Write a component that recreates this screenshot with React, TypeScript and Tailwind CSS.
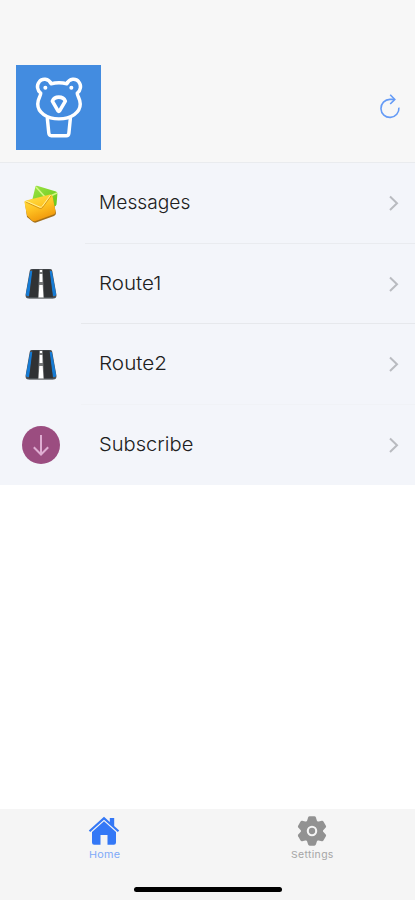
import type { ReactNode } from "react";

function BearLogo() {
  return (
    <svg width="85" height="85" viewBox="0 0 86 86" fill="none" stroke="#fff" strokeWidth="3.5" strokeLinejoin="round" strokeLinecap="round">
      <path d="M35.500 19 C33 13.500 26.500 13 23.500 17 C20.500 20.500 21.500 26 25 28.500 C25 32 22 34 22 39.500 C22 48 31 54.500 43.500 54.500 C56 54.500 65 48 65 39.500 C65 34 62 32 62 28.500 C65.500 26 66.500 20.500 63.500 17 C60.500 13 54 13.500 51.500 19 C46 17.500 41 17.500 35.500 19Z" />
      <path d="M36.800 36.500 Q38.500 32.500 43.300 32.500 Q48.200 32.500 49.900 36.500 L44.100 46.500 Q43.300 47.500 42.500 46.500Z" strokeWidth="3.600" />
      <path d="M31.700 54 L33.200 69 Q33.500 71.500 35.700 71.500 H51 Q53.200 71.500 53.500 69 L55 54" />
      <circle cx="29.700" cy="23" r="1.400" fill="#fff" strokeWidth="1.300" />
      <circle cx="56" cy="23" r="1.400" fill="#fff" strokeWidth="1.300" />
    </svg>
  );
}

function RefreshIcon() {
  return (
    <svg width="24" height="28" viewBox="0 0 24 28" fill="none" stroke="#659bf6" strokeWidth="1.600">
      <path d="M20.900 15.600 A9 9 0 1 1 11.900 7.400 H16" />
      <path d="M12.200 2.800 L16.800 7.400 L12.200 12" />
    </svg>
  );
}

function MailIcon() {
  return (
    <svg width="38" height="40" viewBox="0 0 38 40">
      <defs>
        <linearGradient id="gold" x1="0" y1="0" x2=".4" y2="1">
          <stop stopColor="#ffe64d" />
          <stop offset=".55" stopColor="#ffc423" />
          <stop offset="1" stopColor="#f19a0c" />
        </linearGradient>
        <linearGradient id="green" x1="0" y1="0" x2="1" y2="1">
          <stop stopColor="#9ce344" />
          <stop offset="1" stopColor="#66c719" />
        </linearGradient>
      </defs>
      <path d="M13.500 2.500 Q13.800 1.500 15 1.800 L34 7.500 Q35.600 8 35.400 10 L34.500 20.500 Q34 23 31 22.500 L12 18 Q10 17 10.500 15Z" fill="url(#green)" />
      <path d="M14 3 L24 14 L35 9" fill="none" stroke="#d3f783" strokeWidth="1.500" />
      <path d="M24 14 L32 22" stroke="#b5f34f" />
      <path d="M3 19 Q2 17.500 4 17 L28 11 Q30 11 30.500 13 L34 29 Q34 31 32 32 L14 38.500 Q12 39 10.500 37.500 L5 33Z" fill="#a47019" />
      <path d="M2.500 18.500 Q2 17 4 16.500 L28 10.500 Q30 10.500 30.500 12 L33.500 27.500 Q33.500 29.500 32 30.200 L13 37.200 Q11 37.700 9.500 36 L5 31.500Z" fill="url(#gold)" />
      <path d="M4 18 L18 24.500 Q20 25 21 23 L29 12" fill="none" stroke="#d69a1d" strokeWidth="1" />
      <path d="M4 17 L18 23.200 Q19.500 23.500 20.500 22 L28.500 11.200" fill="none" stroke="#fff29b" strokeWidth="1" />
    </svg>
  );
}

function RoadIcon() {
  return (
    <svg width="32" height="32" viewBox="0 0 32 32">
      <path d="M6.500 1 H25.500 Q27 1 27.300 3 L31.500 27 Q31.500 30.500 28.500 30.500 H3.500 Q.5 30.500 .5 27 L4.700 3 Q5 1 6.500 1Z" fill="#4b5157" />
      <path d="M5.200 3 H7.600 L4.200 28 Q.5 28.500 1 25.500Z M26.800 3 H24.400 L27.800 28 Q31.500 28.500 31 25.500Z" fill="#167bd4" />
      <path d="M7.500 1.500 H24.500 L28 29.500 H4Z" fill="#303234" />
      <path d="M14.300 1.500 H17.700 L19.100 30 H12.900Z" fill="#77797a" />
      <path d="M14.900 2 H17.100 V4 H14.900Z M14.700 6 H17.300 L17.500 14 H14.500Z M14.300 17 H17.700 L18.400 29.500 H13.600Z" fill="#fff" />
      <path d="M4 30.300 H28" stroke="#888b8d" strokeWidth="1" />
    </svg>
  );
}

function DownloadIcon() {
  return (
    <svg width="38" height="38" viewBox="0 0 38 38">
      <circle cx="19" cy="19" r="19" fill="#9b4d80" />
      <path d="M19 9 V28 M11.800 21.300 L19 28.500 L26.200 21.300" fill="none" stroke="#dfadd2" strokeWidth="2" />
    </svg>
  );
}

function Chevron() {
  return (
    <svg width="12" height="18" viewBox="0 0 12 18" fill="none" stroke="#b9bbc0" strokeWidth="2">
      <path d="M2 2.500 L9 9.200 L2 16" />
    </svg>
  );
}

function HomeIcon() {
  return (
    <svg width="32" height="30" viewBox="0 0 32 30" fill="#3478f6">
      <path d="M16 .8 L21.800 6 V2 H26.200 V10 L31.200 14.500 L29.800 16 L16 3.800 L2.200 16 L.8 14.500Z" />
      <path d="M16 5.300 L28 15.900 V26.500 Q28 28.700 25.800 28.700 H19.500 V19 H12.500 V28.700 H6.200 Q4 28.700 4 26.500 V15.900Z" />
    </svg>
  );
}

const gearTeeth = [0, 60, 120, 180, 240, 300];

function GearIcon() {
  return (
    <svg width="32" height="32" viewBox="-16 -16 32 32">
      <g fill="#929292">
        <circle r="11" />
        {gearTeeth.map((angle) => (
          <path key={angle} transform={`rotate(${angle})`} d="M-5.500 -8.500 L-3.900 -13.600 Q-3.500 -14.700 -2.300 -14.700 H2.300 Q3.500 -14.700 3.900 -13.600 L5.500 -8.500Z" />
        ))}
      </g>
      <circle r="4.200" fill="#929292" stroke="#f5f5f5" strokeWidth="2.100" />
    </svg>
  );
}

interface RowProps {
  icon: ReactNode;
  label: string;
  stretch: string;
  divider?: string;
}

function Row({ icon, label, stretch, divider = "" }: RowProps) {
  return (
    <div className="grid h-[80.5px] grid-cols-[81px_1fr]">
      <div className="flex items-center justify-center pt-px">{icon}</div>
      <div className="flex flex-col">
        <div className="flex flex-1 items-center justify-between pt-px pr-[15px] pl-[17.5px]">
          <span className={`origin-left text-[19px] leading-6 font-light text-[#202020] ${stretch}`}>{label}</span>
          <Chevron />
        </div>
        <div className={`h-px ${divider}`} />
      </div>
    </div>
  );
}

export default function App() {
  return (
    <div className="flex h-[900px] w-[415px] flex-col overflow-hidden bg-white font-['Inter',sans-serif]">
      <header className="flex h-[163px] items-start justify-between border-b border-[#e9ebee] bg-[#f7f7f7] pt-[64.5px] pr-[13px] pl-[15.5px]">
        <div className="size-[85px] bg-[#438ce0]">
          <BearLogo />
        </div>
        <div className="pt-[27.5px]"><RefreshIcon /></div>
      </header>
      <main className="bg-[#f3f5fa]">
        <Row icon={<MailIcon />} label="Messages" stretch="scale-x-[1.01]" divider="ml-1 bg-[#e9ebef]" />
        <Row icon={<RoadIcon />} label="Route1" stretch="scale-x-[1.08]" divider="bg-[#e6e8ec]" />
        <Row icon={<RoadIcon />} label="Route2" stretch="scale-x-[1.09]" divider="bg-[#f0f2f6]" />
        <Row icon={<DownloadIcon />} label="Subscribe" stretch="scale-x-[1.06]" />
      </main>
      <nav className="mt-auto flex h-[91px] flex-col bg-[#f5f5f5]">
        <div className="grid h-[76px] grid-cols-2">
          <div className="flex flex-col items-center pt-[7px] pl-px text-[#80a9f8]">
            <HomeIcon />
            <span className="mt-[3px] scale-x-[1.14] text-[9.5px] leading-3 tracking-[0.2px]">Home</span>
          </div>
          <div className="flex flex-col items-center pt-[6px] pl-[2px] text-[#a6a6a6]">
            <GearIcon />
            <span className="mt-[2px] scale-x-[1.1] text-[9.5px] leading-3 tracking-[0.3px]">Settings</span>
          </div>
        </div>
        <div className="mx-auto mt-[2px] h-[5px] w-[148px] rounded-full bg-black" />
      </nav>
    </div>
  );
}
